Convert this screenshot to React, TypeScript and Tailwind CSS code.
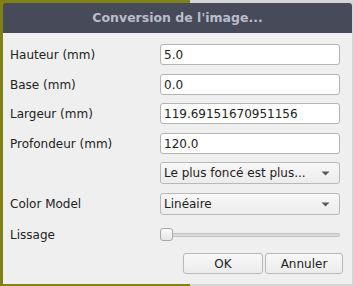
import React from "react";

const font = { fontFamily: '"DejaVu Sans", sans-serif' };

function Caret() {
  return (
    <svg width="9" height="5" viewBox="0 0 9 5" className="shrink-0">
      <path d="M0.5 0.5 L8.5 0.5 L4.5 4.5 Z" fill="#5a5a5a" />
    </svg>
  );
}

function Input({ value }: { value: string }) {
  return (
    <div className="h-[21px] w-[180px] bg-white border border-[#b4b4b4] rounded-[3px] flex items-center pl-[3px] text-[12px] text-[#222]">
      {value}
    </div>
  );
}

function Combo({ value }: { value: string }) {
  return (
    <div className="h-[22px] w-[180px] bg-gradient-to-b from-[#f8f8f8] to-[#ececec] border border-[#b8b8b8] rounded-[3px] flex items-center justify-between pl-[3px] pr-[9px] text-[12px] text-[#222]">
      <span>{value}</span>
      <Caret />
    </div>
  );
}

function Label({ text }: { text: string }) {
  return <div className="w-[150px] text-[12px] text-[#222] leading-none">{text}</div>;
}

export default function App() {
  return (
    <div
      className="w-[353px] h-[286px] overflow-hidden bg-[linear-gradient(to_right,#7f8112_0,#7f8112_190px,#d6d6d6_190px)]"
      style={font}
    >
      <div className="ml-[3px] mt-[3px] w-[349px] h-[281px] flex flex-col rounded-t-[3px] overflow-hidden">
        <div className="h-[30px] bg-[#474a59] flex items-center justify-center shrink-0">
          <span className="text-[12.5px] font-bold text-[#b8becb]">Conversion de l'image...</span>
        </div>
        <div className="flex-1 bg-[#efefef] flex flex-col pl-[7px] pt-[11px]">
          <div className="flex items-center h-[21px]">
            <Label text="Hauteur (mm)" />
            <Input value="5.0" />
          </div>
          <div className="flex items-center h-[21px] mt-[9px]">
            <Label text="Base (mm)" />
            <Input value="0.0" />
          </div>
          <div className="flex items-center h-[21px] mt-[8px]">
            <Label text="Largeur (mm)" />
            <Input value="119.69151670951156" />
          </div>
          <div className="flex items-center h-[21px] mt-[9px]">
            <Label text="Profondeur (mm)" />
            <Input value="120.0" />
          </div>
          <div className="flex items-center h-[22px] mt-[8px]">
            <Label text="" />
            <Combo value="Le plus foncé est plus..." />
          </div>
          <div className="flex items-center h-[22px] mt-[9px]">
            <Label text="Color Model" />
            <Combo value="Linéaire" />
          </div>
          <div className="flex items-center h-[13px] mt-[13px]">
            <Label text="Lissage" />
            <div className="w-[180px] h-[13px] flex items-center">
              <div className="w-[13px] h-[13px] rounded-[3px] border border-[#a8a8a8] bg-gradient-to-b from-[#fafafa] to-[#e6e6e6] shrink-0" />
              <div className="flex-1 h-[4px] rounded-r-[2px] bg-[#d9d9d9] border border-[#c4c4c4] border-l-0" />
            </div>
          </div>
          <div className="flex mt-[12px] pl-[173px] gap-[2px]">
            <div className="w-[80px] h-[21px] rounded-[3px] border border-[#b9b9b9] bg-gradient-to-b from-[#f8f8f8] to-[#ececec] flex items-center justify-center text-[12px] text-[#222]">
              OK
            </div>
            <div className="w-[78px] h-[21px] rounded-[3px] border border-[#b9b9b9] bg-gradient-to-b from-[#f8f8f8] to-[#ececec] flex items-center justify-center text-[12px] text-[#222]">
              Annuler
            </div>
          </div>
        </div>
      </div>
    </div>
  );
}
